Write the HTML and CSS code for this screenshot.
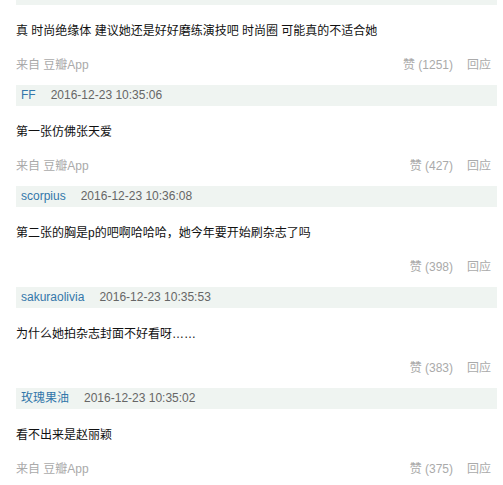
FILE: index.html
```html
<!DOCTYPE html>
<html lang="zh-CN">
<head>
    <meta charset="UTF-8">
    <meta name="viewport" content="width=device-width, initial-scale=1.0">
    <title>评论</title>
    <link rel="stylesheet" href="styles.css">
</head>
<body>
    <div class="comments">
        <div class="comment">
            <div class="comment-head"><span class="author">时尚小姐姐</span><span class="time">2016-12-23 10:34:51</span></div>
            <p class="comment-text">真 时尚绝缘体 建议她还是好好磨练演技吧 时尚圈 可能真的不适合她</p>
            <div class="comment-meta"><span class="source">来自 豆瓣App</span><span class="actions"><span>赞 (1251)</span><span>回应</span></span></div>
        </div>
        <div class="comment">
            <div class="comment-head"><span class="author">FF</span><span class="time">2016-12-23 10:35:06</span></div>
            <p class="comment-text">第一张仿佛张天爱</p>
            <div class="comment-meta"><span class="source">来自 豆瓣App</span><span class="actions"><span>赞 (427)</span><span>回应</span></span></div>
        </div>
        <div class="comment">
            <div class="comment-head"><span class="author">scorpius</span><span class="time">2016-12-23 10:36:08</span></div>
            <p class="comment-text">第二张的胸是p的吧啊哈哈哈，她今年要开始刷杂志了吗</p>
            <div class="comment-meta"><span class="source"></span><span class="actions"><span>赞 (398)</span><span>回应</span></span></div>
        </div>
        <div class="comment">
            <div class="comment-head"><span class="author">sakuraolivia</span><span class="time">2016-12-23 10:35:53</span></div>
            <p class="comment-text">为什么她拍杂志封面不好看呀……</p>
            <div class="comment-meta"><span class="source"></span><span class="actions"><span>赞 (383)</span><span>回应</span></span></div>
        </div>
        <div class="comment">
            <div class="comment-head"><span class="author">玫瑰果油</span><span class="time">2016-12-23 10:35:02</span></div>
            <p class="comment-text">看不出来是赵丽颖</p>
            <div class="comment-meta"><span class="source">来自 豆瓣App</span><span class="actions"><span>赞 (375)</span><span>回应</span></span></div>
        </div>
    </div>
</body>
</html>
```

FILE: styles.css
```css
body {
    margin: 0;
    padding: 0;
    background-color: #fff;
    font-family: "Liberation Sans", "Noto Sans CJK SC", sans-serif;
    font-size: 12px;
    color: #111;
}
.comments {
    margin: -16px 6px 0 16px;
}
.comment-head {
    display: flex;
    gap: 15px;
    height: 21px;
    line-height: 21px;
    padding-left: 5px;
    background-color: #eff4f1;
}
.author {
    color: #37a;
}
.time {
    color: #666;
}
.comment-text {
    margin: 0;
    padding-top: 16px;
    line-height: 20px;
}
.comment-meta {
    display: flex;
    justify-content: space-between;
    margin: 14px 0 10px;
    padding-right: 6px;
    line-height: 20px;
    color: #aaa;
}
.actions {
    display: flex;
    gap: 14px;
}
```
